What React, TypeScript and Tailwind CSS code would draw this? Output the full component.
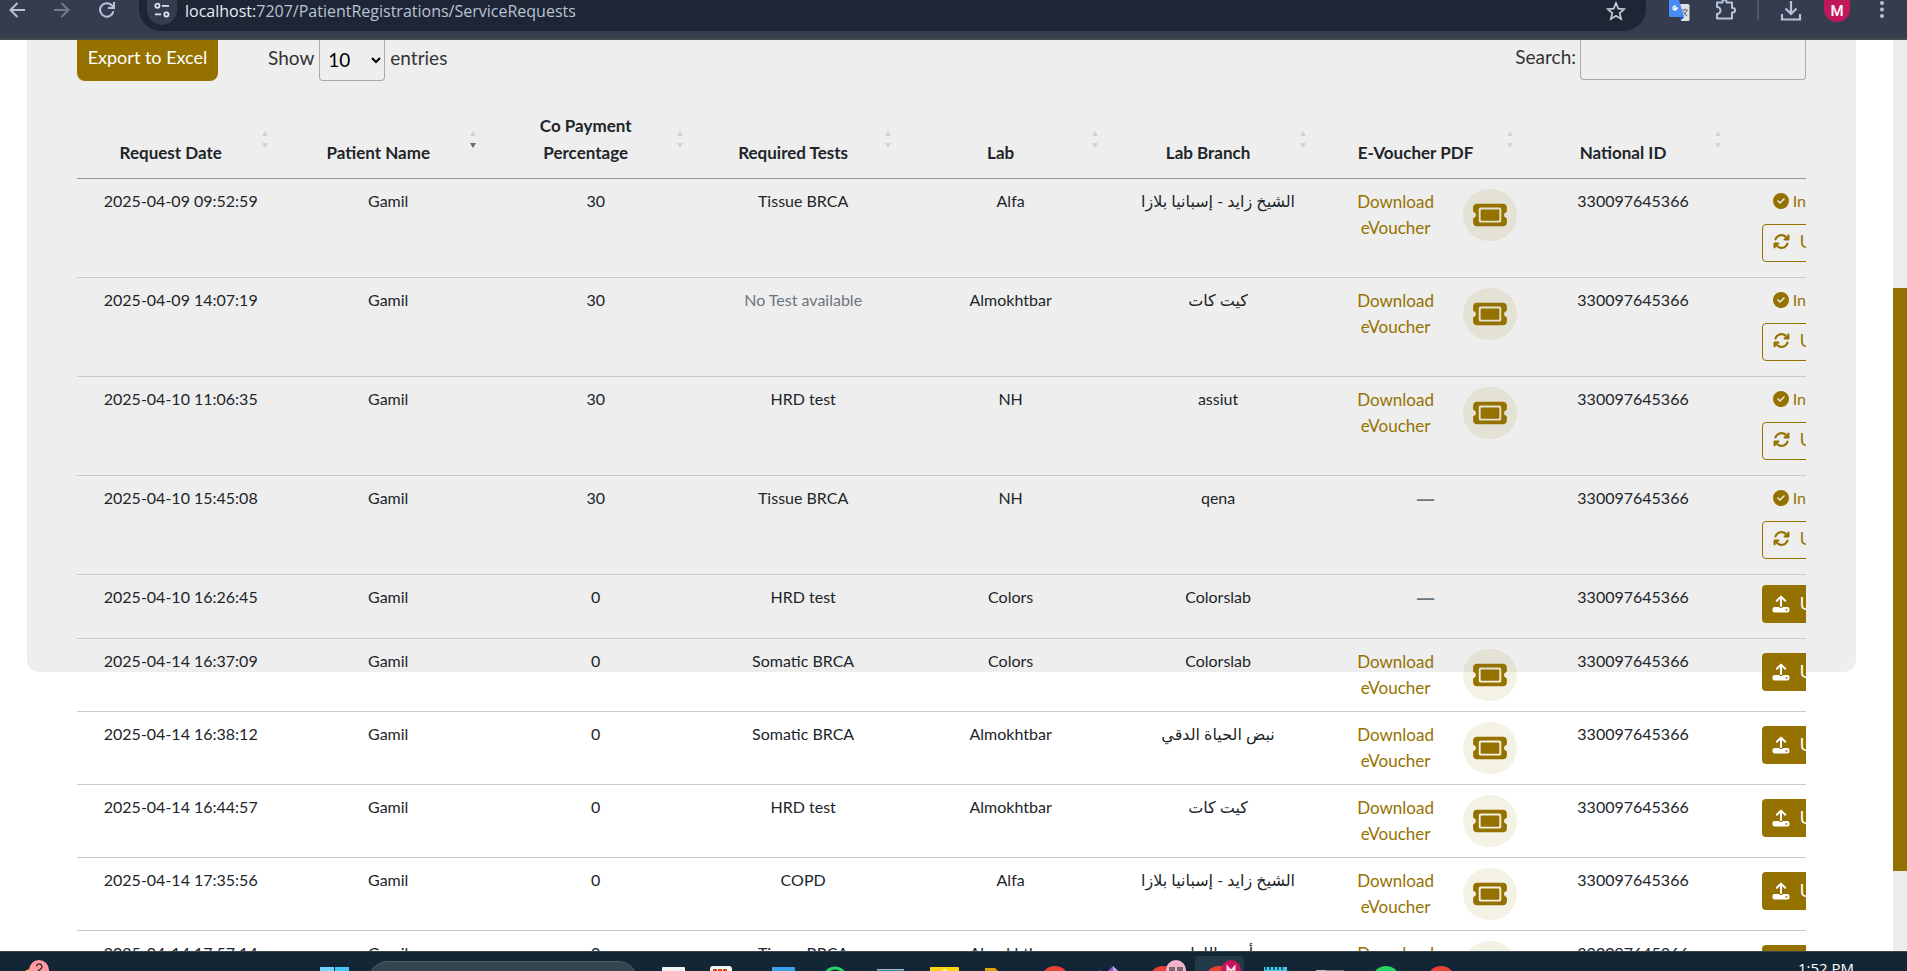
import type { ReactNode } from "react";
import { FaArrowsRotate, FaCircleCheck, FaTicket } from "react-icons/fa6";

type Action = "update" | "upload";

interface ServiceRequest {
  date: string;
  patient: string;
  coPayment: number;
  test: string | null;
  lab: string;
  branch: string;
  voucher: boolean;
  nationalId: string;
  action: Action;
}

const requests: ServiceRequest[] = [
  { date: "2025-04-09 09:52:59", patient: "Gamil", coPayment: 30, test: "Tissue BRCA", lab: "Alfa", branch: "الشيخ زايد - إسبانيا بلازا", voucher: true, nationalId: "330097645366", action: "update" },
  { date: "2025-04-09 14:07:19", patient: "Gamil", coPayment: 30, test: null, lab: "Almokhtbar", branch: "كيت كات", voucher: true, nationalId: "330097645366", action: "update" },
  { date: "2025-04-10 11:06:35", patient: "Gamil", coPayment: 30, test: "HRD test", lab: "NH", branch: "assiut", voucher: true, nationalId: "330097645366", action: "update" },
  { date: "2025-04-10 15:45:08", patient: "Gamil", coPayment: 30, test: "Tissue BRCA", lab: "NH", branch: "qena", voucher: false, nationalId: "330097645366", action: "update" },
  { date: "2025-04-10 16:26:45", patient: "Gamil", coPayment: 0, test: "HRD test", lab: "Colors", branch: "Colorslab", voucher: false, nationalId: "330097645366", action: "upload" },
  { date: "2025-04-14 16:37:09", patient: "Gamil", coPayment: 0, test: "Somatic BRCA", lab: "Colors", branch: "Colorslab", voucher: true, nationalId: "330097645366", action: "upload" },
  { date: "2025-04-14 16:38:12", patient: "Gamil", coPayment: 0, test: "Somatic BRCA", lab: "Almokhtbar", branch: "نبض الحياة الدقي", voucher: true, nationalId: "330097645366", action: "upload" },
  { date: "2025-04-14 16:44:57", patient: "Gamil", coPayment: 0, test: "HRD test", lab: "Almokhtbar", branch: "كيت كات", voucher: true, nationalId: "330097645366", action: "upload" },
  { date: "2025-04-14 17:35:56", patient: "Gamil", coPayment: 0, test: "COPD", lab: "Alfa", branch: "الشيخ زايد - إسبانيا بلازا", voucher: true, nationalId: "330097645366", action: "upload" },
  { date: "2025-04-14 17:57:14", patient: "Gamil", coPayment: 0, test: "Tissue BRCA", lab: "Almokhtbar", branch: "أرض اللواء", voucher: true, nationalId: "330097645366", action: "upload" },
];

const columns = [
  "Request Date",
  "Patient Name",
  "Co Payment Percentage",
  "Required Tests",
  "Lab",
  "Lab Branch",
  "E-Voucher PDF",
  "National ID",
  "Result",
];

function ToolbarButton({ label, children }: { label: string; children: ReactNode }) {
  return (
    <button type="button" aria-label={label} className="flex h-5 w-[45px] items-center justify-center">
      {children}
    </button>
  );
}

function ArrowIcon({ className }: { className: string }) {
  return (
    <svg viewBox="0 0 16 16" className={className} fill="none" stroke="currentColor" strokeWidth="2">
      <path d="M16 8H2M8.5 1 1.5 8l7 7" />
    </svg>
  );
}

function BrowserBar() {
  return (
    <header className="flex h-10 shrink-0 items-start border-b-2 border-[#45484f] bg-[#343c4d] text-[#b4c2dc]">
      <nav className="-ml-1.5 flex w-[145px] shrink-0" aria-label="Browser">
        <ToolbarButton label="Back"><ArrowIcon className="h-4 w-4" /></ToolbarButton>
        <ToolbarButton label="Forward"><ArrowIcon className="h-4 w-4 rotate-180 text-[#737b8a]" /></ToolbarButton>
        <ToolbarButton label="Reload">
          <svg viewBox="0 0 16 16" className="h-4 w-4" fill="none" stroke="currentColor" strokeWidth="2">
            <path d="M14.4 9.2A6.7 6.7 0 1 1 12.6 3.2L14.6 5.2" />
            <path d="M15 0v6H9" />
          </svg>
        </ToolbarButton>
      </nav>
      <div className="flex h-[31px] min-w-0 flex-1 items-start rounded-b-[22px] bg-[#1e2636] pr-4 pl-2">
        <button type="button" aria-label="Site information" className="flex h-[25px] w-[30px] items-start justify-center rounded-b-[15px] bg-[#343c4d] pt-0.5 text-[#dfe3ea]">
          <svg viewBox="0 0 16 16" className="h-4 w-4" fill="none" stroke="currentColor" strokeWidth="1.8">
            <circle cx="3.4" cy="3.8" r="2.1" />
            <path d="M8 3.8h7M1 12.4h6" />
            <circle cx="12.4" cy="12.4" r="2.1" />
          </svg>
        </button>
        <p className="ml-2 h-[22px] truncate font-['Open_Sans',sans-serif] text-[16px] leading-[22px] text-[#b9c2d2]">
          <span className="text-[#e9edf4]">localhost:</span>7207/PatientRegistrations/ServiceRequests
        </p>
        <button type="button" aria-label="Bookmark" className="ml-auto flex h-[22px] w-7 items-center justify-center text-[#c6cbd4]">
          <svg viewBox="0 0 20 20" className="h-5 w-5" fill="none" stroke="currentColor" strokeWidth="1.7">
            <path d="m10 2 2.3 5.6 6 .5-4.6 3.900 1.400 5.900-5.100-3.200-5.100 3.200L6.300 12 1.700 8.100l6-.5z" />
          </svg>
        </button>
      </div>
      <div className="ml-4 flex shrink-0 items-start">
        <button type="button" aria-label="Translate" className="flex w-[34px] justify-center">
          <svg viewBox="0 0 22 22" className="h-[22px] w-[22px]">
            <path d="M9 4h11a1.5 1.5 0 0 1 1.5 1.5v14A1.5 1.5 0 0 1 20 21h-7z" fill="#dfe1e3" />
            <path d="M1 0h10l5 17H2.5A1.5 1.5 0 0 1 1 15.5z" fill="#4a8af4" />
            <path d="m12 17 4 0-3.500 4z" fill="#2546c4" />
            <path d="M9.8 8H7v1.4h1.2A1.9 1.9 0 1 1 8 6.5" fill="none" stroke="#fff" strokeWidth="1.3" />
            <path d="M13.600 10h6.400M17 8.500V10m2 0c-.5 2.500-2.200 4.600-4 5.700m.2-4.200c.8 2 2.300 3.500 4 4.500" fill="none" stroke="#5d7383" strokeWidth="1.1" />
          </svg>
        </button>
        <button type="button" aria-label="Extensions" className="ml-[13px] flex w-[34px] justify-center">
          <svg viewBox="0 0 22 22" className="h-[22px] w-[22px]" fill="none" stroke="currentColor" strokeWidth="2">
            <path d="M2 2.500h5.500V1.800a2 2 0 0 1 4 0v.7H17V8h.800a2.200 2.200 0 0 1 0 4.400H17V18.500H2V14a3 3 0 0 0 0-7z" strokeLinejoin="round" />
          </svg>
        </button>
        <span className="mr-[15px] ml-[14px] h-5 w-0.5 bg-[#4b556a]" />
        <button type="button" aria-label="Downloads" className="flex w-[34px] justify-center">
          <svg viewBox="0 0 22 22" className="h-[22px] w-[22px]" fill="none" stroke="currentColor" strokeWidth="2.2">
            <path d="M11 1v12.500M5.500 8.500 11 14l5.500-5.500M2 14v5.500h18V14" />
          </svg>
        </button>
        <button type="button" className="ml-4 h-[22px] w-[26px] rounded-b-full bg-[#c2185b] text-center font-['Roboto',sans-serif] text-[15px] leading-5 font-medium text-white">M</button>
        <button type="button" aria-label="Menu" className="mr-3 ml-[19px] flex w-[26px] justify-center">
          <svg viewBox="0 0 6 20" className="h-5 w-1.5" fill="currentColor">
            <circle cx="3" cy="3" r="2" /><circle cx="3" cy="9.5" r="2" /><circle cx="3" cy="16" r="2" />
          </svg>
        </button>
      </div>
    </header>
  );
}

function SortArrows({ descending }: { descending: boolean }) {
  return (
    <svg viewBox="0 0 6 18" className="absolute top-[29px] right-4 h-[18px] w-1.5">
      <path d="M0 5 3 0l3 5z" fill="#d2d2d2" />
      <path d="M0 12h6l-3 5z" fill={descending ? "#6b6b6b" : "#d2d2d2"} />
    </svg>
  );
}

function UploadIcon() {
  return (
    <svg viewBox="0 0 18 18" className="h-[18px] w-[18px] shrink-0" fill="currentColor">
      <path d="M9 11V2M4.800 5.800 9 1.600l4.200 4.200" fill="none" stroke="currentColor" strokeWidth="2" strokeLinecap="round" strokeLinejoin="round" />
      <path fillRule="evenodd" d="M2.500 12H7a2.300 2.300 0 0 0 4 0h4.500A2 2 0 0 1 17.500 14v1.500a2 2 0 0 1-2 2h-13a2 2 0 0 1-2-2V14a2 2 0 0 1 2-2zm12 2a.9.9 0 1 0 0 1.800.9.9 0 0 0 0-1.800z" />
    </svg>
  );
}

function VoucherCell({ available }: { available: boolean }) {
  if (!available) {
    return <span className="block h-6 text-[26px] leading-6 text-[#6c757d]">—</span>;
  }
  return (
    <a href="#voucher" className="flex items-start gap-1 text-[17px] leading-[26px] text-[#957200]">
      <span className="flex-1">Download eVoucher</span>
      <span className="flex h-[52px] w-[54px] items-center justify-center rounded-full bg-[#957200]/10">
        <FaTicket className="h-[30px] w-[34px]" />
      </span>
    </a>
  );
}

function ActionCell({ action }: { action: Action }) {
  if (action === "upload") {
    return (
      <button type="button" className="flex h-[38px] w-full items-center gap-2.5 rounded bg-[#957200] px-2.5 text-[17px] whitespace-nowrap text-white">
        <UploadIcon />
        Upload Result
      </button>
    );
  }
  return (
    <div className="flex flex-col gap-[11px] text-[#957200]">
      <span className="flex h-6 items-center gap-1 pl-[11px]">
        <FaCircleCheck className="h-4 w-4 shrink-0" />
        Inserted
      </span>
      <button type="button" className="flex h-[38px] w-full items-center gap-2.5 rounded border border-[#957200] px-2.5 pb-0.5 text-[17px] whitespace-nowrap">
        <FaArrowsRotate className="h-[17px] w-[17px] shrink-0" />
        Update Result
      </button>
    </div>
  );
}

function RequestTable() {
  return (
    <div className="overflow-hidden">
      <table className="w-[108%] table-fixed border-collapse text-center text-[16px] leading-6 text-[#212529]">
        <thead>
          <tr className="border-b border-[#979797]">
            {columns.map((name, i) => (
              <th key={name} scope="col" className="relative h-[76px] pt-2 pr-[30px] pb-3 pl-2.5 align-bottom text-[17px] leading-[27px] font-bold">
                {name}
                <SortArrows descending={i === 1} />
              </th>
            ))}
          </tr>
        </thead>
        <tbody>
          {requests.map((r) => (
            <tr key={r.date} className="border-b border-[#cacaca] align-top">
              <td className="px-2.5 pt-2.5">{r.date}</td>
              <td className="px-2.5 pt-2.5">{r.patient}</td>
              <td className="px-2.5 pt-2.5">{r.coPayment}</td>
              <td className="px-2.5 pt-2.5">{r.test ?? <span className="text-[#6c757d]">No Test available</span>}</td>
              <td className="px-2.5 pt-2.5">{r.lab}</td>
              <td className="px-2.5 pt-2.5" dir="auto">{r.branch}</td>
              <td className={r.voucher ? "py-2.5 pr-3 pl-2.5" : "px-2.5 pt-2.5"}><VoucherCell available={r.voucher} /></td>
              <td className="px-2.5 pt-2.5">{r.nationalId}</td>
              <td className={r.action === "update" ? "px-[25px] pt-2.5 pb-[15px]" : "px-[25px] pt-2.5 pb-[15px] align-middle"}>
                <ActionCell action={r.action} />
              </td>
            </tr>
          ))}
        </tbody>
      </table>
    </div>
  );
}

function Controls() {
  return (
    <div className="flex h-[62px] items-start text-[19px] text-[#333]">
      <button type="button" className="h-[41px] w-[141px] rounded-b-lg bg-[#957200] pb-1.5 text-[18px] text-white">Export to Excel</button>
      <label className="ml-[50px] flex h-[41px] items-center gap-[5px]">
        <span className="pb-1">Show</span>
        <select defaultValue="10" className="h-[41px] w-[66px] rounded-b border border-t-0 border-[#aaa] bg-transparent px-1 pb-0.5 text-[19px] text-black">
          <option>10</option>
          <option>25</option>
          <option>50</option>
          <option>100</option>
        </select>
        <span className="pb-1">entries</span>
      </label>
      <label className="ml-auto flex h-10 items-center gap-1">
        <span className="pb-1.5">Search:</span>
        <input type="search" className="h-10 w-[226px] rounded-b border border-t-0 border-[#aaa] bg-transparent px-2" />
      </label>
    </div>
  );
}

const taskbarIcons: { name: string; art: ReactNode }[] = [
  { name: "Task view", art: <rect x="19" y="11" width="23" height="20" rx="1" fill="#f1f3f4" /> },
  { name: "Store", art: <><rect x="12" y="10" width="22" height="20" rx="3" fill="#f1f3f4" /><path d="M15 13h4v4h-4zM20 13h4v4h-4zM25 13h4v4h-4z" fill="#d9480f" /></> },
  { name: "Explorer", art: <rect x="19" y="11" width="23" height="20" rx="1" fill="#3b9fed" /> },
  { name: "WhatsApp", art: <circle cx="27" cy="23" r="11" fill="none" stroke="#25d366" strokeWidth="3" /> },
  { name: "Database", art: <><path d="M14 13h27v8H14z" fill="#3d8b9b" /><path d="M14 13h27v1H14z" fill="#a9b9bf" /></> },
  { name: "Notes", art: <><rect x="12" y="11" width="29" height="20" rx="1" fill="#fbd50f" /><circle cx="27" cy="16" r="3" fill="#fff3a3" /></> },
  { name: "Files", art: <path d="M12 12h10l4 4H12z" fill="#e0a100" /> },
  { name: "Browser", art: <circle cx="27" cy="24" r="14" fill="#ea4335" /> },
  { name: "Visual Studio", art: <><path d="m23 17 7-7 7 7z" fill="#8a5cc7" /><path d="m30 10 7 7h-7z" fill="#c9a0f7" /><path d="M16 14h2v2h-2z" fill="#5c2d91" /></> },
  { name: "Browser, second profile", art: <><circle cx="25" cy="24" r="14" fill="#ea4335" /><circle cx="38" cy="14" r="10" fill="#f3b5c8" /><path d="M31 11h6v4h-6zM39 11h6v4h-6z" fill="#77696f" /></> },
  { name: "Browser, current profile", art: <><rect x="2" y="0" width="49" height="20" rx="4" fill="#243947" /><circle cx="26" cy="24" r="14" fill="#ea4335" /><circle cx="38" cy="14" r="10" fill="#c2185b" /><path d="M34.500 18v-7l3.500 4 3.500-4v7" fill="none" stroke="#f7dbe7" strokeWidth="2" /></> },
  { name: "Notepad", art: <><rect x="16" y="11" width="23" height="20" fill="#4fc3e8" /><path d="M17 11h2v3h-2zM21 11h2v3h-2zM25 11h2v3h-2zM29 11h2v3h-2zM33 11h2v3h-2z" fill="#12687f" /></> },
  { name: "Photos", art: <><rect x="13" y="14" width="10" height="8" fill="#b9bdc0" /><rect x="23" y="14" width="18" height="8" fill="#777f84" /></> },
  { name: "Messages", art: <circle cx="28" cy="24" r="14" fill="#25d366" /> },
  { name: "Mail", art: <circle cx="28" cy="24" r="14" fill="#ea4335" /> },
];

function Taskbar() {
  return (
    <footer className="flex h-5 shrink-0 items-start overflow-hidden border-t border-[#38444d] bg-[#132636] pt-1">
      <div className="w-[316px] shrink-0 pl-[23px]">
        <svg viewBox="0 0 30 15" className="h-[15px] w-[30px]">
          <circle cx="7" cy="20" r="7" fill="#f0b429" />
          <circle cx="16" cy="14" r="10" fill="#ff99a4" />
          <path d="M13.500 10.500a2.700 2.700 0 1 1 4.600 2L14 16" fill="none" stroke="#222" strokeWidth="1.3" />
        </svg>
      </div>
      <button type="button" aria-label="Start" className="w-9 shrink-0 pl-1">
        <svg viewBox="0 0 30 15" className="h-[15px] w-[30px]">
          <rect y="11" width="14" height="14" fill="#6fd3fb" />
          <rect x="15" y="11" width="14" height="14" fill="#45c8fb" />
        </svg>
      </button>
      <div className="mt-[5px] ml-4 h-10 w-[270px] shrink-0 rounded-full border border-[#4d5b65] bg-[#34454f]" />
      <div className="ml-[5px] flex min-w-0">
        {taskbarIcons.map((icon) => (
          <button key={icon.name} type="button" aria-label={icon.name} className="w-[55px] shrink-0">
            <svg viewBox="0 0 55 15" className="h-[15px] w-[55px]">{icon.art}</svg>
          </button>
        ))}
      </div>
      <time className="mt-0.5 mr-[53px] ml-auto shrink-0 font-['Open_Sans',sans-serif] text-[15px] leading-5 text-white">1:52 PM</time>
    </footer>
  );
}

export default function App() {
  return (
    <div className="flex h-screen flex-col overflow-hidden bg-white font-['Lato','DejaVu_Sans',sans-serif]">
      <BrowserBar />
      <div className="flex min-h-0 flex-1">
        <main className="min-w-0 flex-1 overflow-hidden pr-[37px] pl-[27px]">
          <section className="h-[632px] rounded-b-xl bg-[#eee] px-[50px]">
            <Controls />
            <RequestTable />
          </section>
        </main>
        <div className="flex w-3.5 shrink-0 flex-col bg-[#ededed]">
          <div className="mt-[248px] h-[583px] bg-[#957200]" />
        </div>
      </div>
      <Taskbar />
    </div>
  );
}
